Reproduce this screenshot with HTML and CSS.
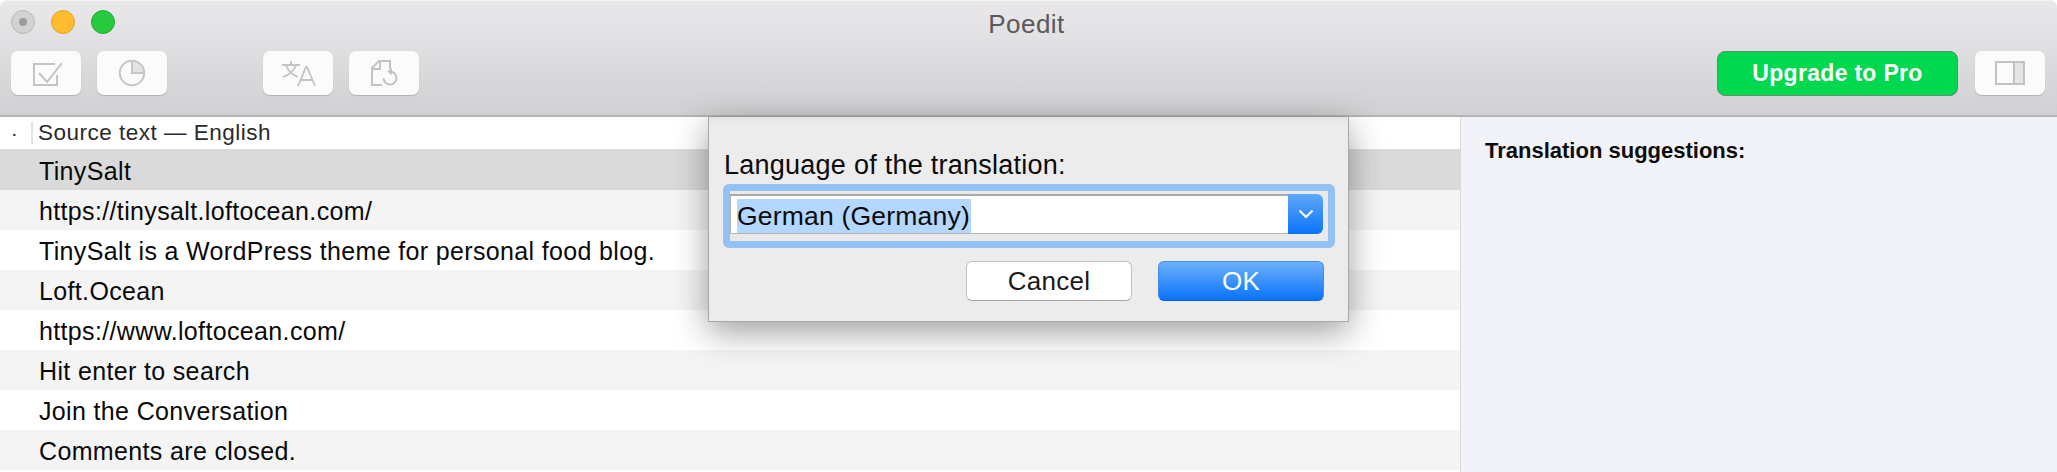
FILE: index.html
```html
<!DOCTYPE html>
<html lang="en">
<head>
<meta charset="utf-8">
<title>Poedit</title>
<link rel="stylesheet" href="styles.css">
</head>
<body>
<div class="window">
  <header class="chrome">
    <div class="titlebar">
      <div class="lights">
        <span class="light close"><span class="close-dot"></span></span>
        <span class="light min"></span>
        <span class="light max"></span>
      </div>
      <div class="title">Poedit</div>
    </div>
    <div class="toolbar">
      <div class="tool-group">
        <button class="tool"><svg class="icon" width="32" height="32" viewBox="0 0 32 32"><path d="M27 18v10H4V7h21" fill="none" stroke="#c4c4c4" stroke-width="2"/><path d="M9 16l8 9L32 6" fill="none" stroke="#c4c4c4" stroke-width="2"/></svg></button>
        <button class="tool"><svg class="icon" width="32" height="32" viewBox="0 0 32 32"><path d="M16 16V4A12 12 0 0 1 28 16z" fill="#e4e4e4"/><circle cx="16" cy="16" r="12.200" fill="none" stroke="#c6c6c6" stroke-width="2"/><path d="M16 4v12h12" fill="none" stroke="#c6c6c6" stroke-width="2"/></svg></button>
      </div>
      <div class="tool-group">
        <button class="tool"><svg class="icon" width="36" height="32" viewBox="0 0 36 32"><g fill="none" stroke="#c4c4c4" stroke-width="1.800"><path d="M2 8h18M11 4v4M6 8c2 6 6 10 12 12M16 8c-2 6-7 10-13 12"/><path d="M18 29l8-19h1l8 19M21 23h11"/></g></svg></button>
        <button class="tool"><svg class="icon" width="32" height="32" viewBox="0 0 32 32"><g fill="none" stroke="#c4c4c4" stroke-width="2"><path d="M14 28H4V11l7-7h11v8"/><path d="M4 12h8V4"/><path d="M22 14.500a6.500 6.500 0 1 1-6.500 6.500"/></g><path d="M24 11v7l-5-3.500z" fill="#c4c4c4"/></svg></button>
      </div>
      <div class="tool-spacer"></div>
      <button class="upgrade">Upgrade to Pro</button>
      <button class="tool"><svg class="icon" width="30" height="24" viewBox="0 0 30 24"><rect x="1" y="1" width="28" height="22" fill="none" stroke="#c2c2c2" stroke-width="2"/><rect x="19" y="2" width="9" height="20" fill="#e4e4e4"/><path d="M19 1v22" stroke="#c2c2c2" stroke-width="2"/></svg></button>
    </div>
  </header>
  <main class="content">
    <section class="list">
      <div class="list-head">
        <span class="head-dot">·</span>
        <span class="head-label">Source text — English</span>
      </div>
      <div class="row selected">TinySalt</div>
      <div class="row alt">https://tinysalt.loftocean.com/</div>
      <div class="row">TinySalt is a WordPress theme for personal food blog.</div>
      <div class="row alt">Loft.Ocean</div>
      <div class="row">https://www.loftocean.com/</div>
      <div class="row alt">Hit enter to search</div>
      <div class="row">Join the Conversation</div>
      <div class="row alt">Comments are closed.</div>
    </section>
    <aside class="side">
      <h2 class="side-title">Translation suggestions:</h2>
    </aside>
  </main>
  <div class="dialog">
    <label class="dialog-label">Language of the translation:</label>
    <div class="focus-ring">
      <div class="combo">
        <div class="combo-field"><span class="combo-text">German (Germany)</span></div>
        <div class="combo-arrow"><svg width="16" height="10" viewBox="0 0 16 10"><path d="M1.500 1.500L8 8l6.500-6.500" fill="none" stroke="#fff" stroke-width="2.200"/></svg></div>
      </div>
    </div>
    <div class="dialog-buttons">
      <button class="btn cancel">Cancel</button>
      <button class="btn ok">OK</button>
    </div>
  </div>
</div>
</body>
</html>
```
FILE: styles.css
```css
* { box-sizing: border-box; }
html, body { margin: 0; padding: 0; background: #fff; }
body { width: 2057px; height: 472px; overflow: hidden; font-family: "Liberation Sans", Arial, sans-serif; }
button { font-family: inherit; margin: 0; padding: 0; cursor: default; }

.window { position: relative; width: 2057px; height: 472px; overflow: hidden; display: flex; flex-direction: column; }

.chrome {
  height: 117px;
  flex: none;
  border-radius: 7px 7px 0 0;
  background: linear-gradient(#e9e7e9 0, #e3e2e4 30px, #d0cfd1 115px);
  border-top: 1px solid #f2f2f2;
  border-bottom: 2px solid #b4b3b5;
  display: flex;
  flex-direction: column;
}
.titlebar { position: relative; height: 50px; flex: none; display: flex; align-items: flex-start; padding: 9px 0 0 11px; }
.lights { display: flex; gap: 16px; }
.light { width: 24px; height: 24px; border-radius: 50%; display: flex; align-items: center; justify-content: center; }
.close { background: #d2d2d2; border: 1px solid #b9b9b9; }
.close-dot { width: 8px; height: 8px; border-radius: 50%; background: #9c9c9c; }
.min { background: #ffbd2e; border: 1px solid #e3a22a; }
.max { background: #27c93f; border: 1px solid #1faf33; }
.title { position: absolute; left: 0; right: 0; top: 9px; text-align: center; font-size: 26px; line-height: 29px; letter-spacing: .5px; color: #5b5a5b; padding-right: 4px; }

.toolbar { display: flex; align-items: flex-start; padding: 0 12px 0 11px; gap: 16px; }
.tool-group { display: flex; gap: 16px; }
.tool-group + .tool-group { margin-left: 80px; }
.tool-spacer { flex: 1; }
.tool {
  width: 70px; height: 44px; border: 0; border-radius: 7px;
  background: #fbfbfb;
  box-shadow: 0 1px 1px rgba(0,0,0,.18);
  display: flex; align-items: center; justify-content: center;
}
.upgrade {
  width: 241px; height: 45px; border-radius: 8px;
  border: 1px solid #5f8f6f;
  background: #00d84f;
  color: #fff; font-size: 23px; font-weight: 700; letter-spacing: .3px;
  margin-right: 1px;
}

.content { flex: 1; display: flex; min-height: 0; }
.list { width: 1460px; flex: none; background: #fff; }
.list-head { height: 33px; display: flex; align-items: center; border-bottom: 1px solid #dcdcdc; padding-left: 11px; }
.head-dot { width: 20px; font-size: 20px; line-height: 22px; color: #222; }
.head-label { border-left: 2px solid #e2e2e2; padding-left: 5px; height: 22px; font-size: 22.500px; line-height: 22px; letter-spacing: .5px; color: #2a2a2a; }
.row { height: 40px; padding-left: 39px; font-size: 25px; line-height: 42px; letter-spacing: .35px; color: #0a0a0a; background: #fff; white-space: nowrap; }
.row.alt { background: #f4f4f4; }
.row.selected { background: #dadada; }

.side { flex: 1; background: #f1f3f8; border-left: 1px solid #d9d9dc; padding: 21px 0 0 24px; }
.side-title { margin: 0; font-size: 22px; line-height: 26px; font-weight: 700; color: #0c0c0c; }

.dialog {
  position: absolute; left: 708px; top: 116px; width: 641px; height: 206px;
  background: linear-gradient(#e3e3e3 0, #ececec 8px, #ececec 100%);
  border: 1px solid #a8a8a8; border-top: 1px solid #9a9a9a;
  box-shadow: 0 10px 32px rgba(0,0,0,.38);
  padding: 33px 13px 0 14px;
  display: flex; flex-direction: column;
}
.dialog-label { font-size: 27px; line-height: 30px; letter-spacing: .25px; color: #0a0a0a; margin-left: 1px; }
.focus-ring {
  margin-top: 4px; height: 64px; border: 7px solid #94c1f3; border-radius: 6px;
  padding: 3px 0 0;
  background: #e9e9e9;
  display: flex;
}
.combo { height: 40px; flex: 1; display: flex; margin-right: 5px; }
.combo-field { flex: 1; background: #fff; border: 1px solid #b5b5b5; border-top: 2px solid #aaa; padding: 3px 0 0 6px; border-right: 0; }
.combo-text { display: inline-block; background: #b3d7ff; font-size: 26.500px; line-height: 34px; height: 34px; letter-spacing: .2px; color: #0a0a0a; padding-right: 1px; }
.combo-arrow { width: 35px; flex: none; border-radius: 0 6px 6px 0; background: linear-gradient(#5fa8f8, #0a74fb); display: flex; align-items: center; justify-content: center; }

.dialog-buttons { display: flex; justify-content: flex-end; gap: 26px; margin-top: 13px; padding-right: 11px; }
.btn { width: 166px; height: 40px; border-radius: 6px; font-size: 26px; letter-spacing: .3px; }
.cancel { background: #fff; border: 1px solid #c2c2c2; border-bottom-color: #a5a5a5; color: #1a1a1a; }
.ok { background: linear-gradient(#6db0fb, #0a72fc); border: 1px solid #3f8eee; border-bottom-color: #0a62e0; color: #fff; }
```
